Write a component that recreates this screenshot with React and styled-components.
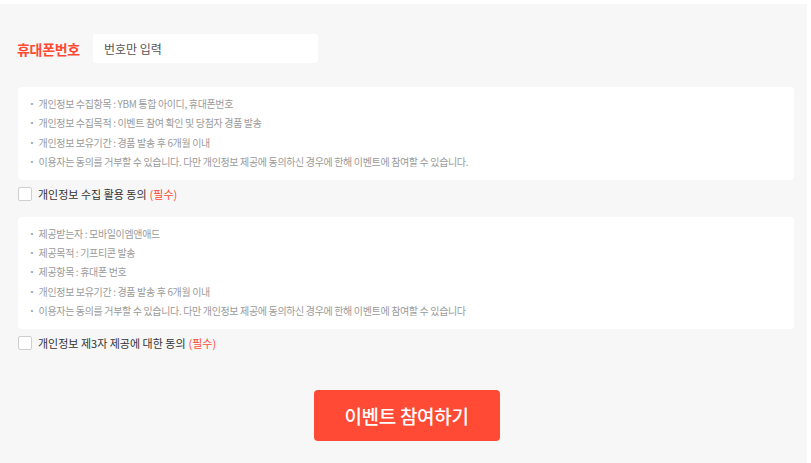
import React, { useState } from "react";
import styled, { createGlobalStyle } from "styled-components";

const GlobalStyle = createGlobalStyle`
  html, body {
    margin: 0;
    padding: 0;
    background: #ffffff;
  }
  body {
    font-family: "Noto Sans CJK KR", "Noto Sans", sans-serif;
  }
`;

const Page = styled.div`
  margin-top: 4px;
  width: 807px;
  height: 459px;
  background-color: #f7f7f7;
  box-sizing: border-box;
  padding: 30px 13px 0 18px;
  display: flex;
  flex-direction: column;
`;

const PhoneRow = styled.div`
  display: flex;
  align-items: center;
  height: 29px;
`;

const PhoneLabel = styled.label`
  width: 76px;
  margin-left: -1px;
  color: #ff4a33;
  font-size: 14px;
  font-weight: 700;
  letter-spacing: -0.3px;
`;

const PhoneInput = styled.input`
  width: 225px;
  height: 29px;
  box-sizing: border-box;
  border: none;
  border-radius: 3px;
  background: #ffffff;
  padding: 0 11px;
  font-family: inherit;
  font-size: 12px;
  color: #333;
  outline: none;

  &::placeholder {
    color: #555;
  }
`;

const TermsBox = styled.ul`
  list-style: none;
  margin: ${(p) => p.$top}px 0 0;
  padding: 7px 11px 8px;
  background: #ffffff;
  border-radius: 4px;
  display: flex;
  flex-direction: column;
`;

const TermItem = styled.li`
  font-size: 10px;
  line-height: 19.4px;
  color: #9a9a9a;
  letter-spacing: -0.35px;

  &::before {
    content: "·";
    margin-right: 4px;
    font-weight: 700;
  }
`;

const AgreeRow = styled.label`
  display: flex;
  align-items: center;
  margin-top: 7px;
  gap: 6px;
  font-size: 11px;
  color: #333;
  cursor: pointer;
  height: 14px;
`;

const Box = styled.span`
  width: 14px;
  height: 14px;
  box-sizing: border-box;
  border: 1px solid #cfcfcf;
  border-radius: 2px;
  background: ${(p) => (p.$checked ? "#ff4b35" : "#ffffff")};
  border-color: ${(p) => (p.$checked ? "#ff4b35" : "#cfcfcf")};
  display: inline-flex;
  align-items: center;
  justify-content: center;
`;

const Required = styled.span`
  color: #ff4b35;
  margin-left: 3px;
`;

const Footer = styled.div`
  display: flex;
  justify-content: center;
  margin-top: 40px;
  padding-left: 1px;
`;

const SubmitButton = styled.button`
  width: 186px;
  height: 51px;
  border: none;
  border-radius: 4px;
  background: #ff4b35;
  color: #ffffff;
  font-family: inherit;
  font-size: 19px;
  font-weight: 500;
  letter-spacing: -0.3px;
  cursor: pointer;
`;

const collectTerms = [
  "개인정보 수집항목 : YBM 통합 아이디, 휴대폰번호",
  "개인정보 수집목적 : 이벤트 참여 확인 및 당첨자 경품 발송",
  "개인정보 보유기간 : 경품 발송 후 6개월 이내",
  "이용자는 동의를 거부할 수 있습니다. 다만 개인정보 제공에 동의하신 경우에 한해 이벤트에 참여할 수 있습니다.",
];

const shareTerms = [
  "제공받는자 : 모바일이엠앤애드",
  "제공목적 : 기프티콘 발송",
  "제공항목 : 휴대폰 번호",
  "개인정보 보유기간 : 경품 발송 후 6개월 이내",
  "이용자는 동의를 거부할 수 있습니다. 다만 개인정보 제공에 동의하신 경우에 한해 이벤트에 참여할 수 있습니다",
];

const Agree = ({ label, checked, onToggle }) => (
  <AgreeRow onClick={onToggle}>
    <Box $checked={checked}>
      {checked && (
        <svg width="10" height="10" viewBox="0 0 10 10">
          <path d="M2 5.2l2 2 4-4.4" stroke="#fff" strokeWidth="1.6" fill="none" />
        </svg>
      )}
    </Box>
    <span>
      {label}
      <Required>(필수)</Required>
    </span>
  </AgreeRow>
);

const App = () => {
  const [phone, setPhone] = useState("");
  const [agreeCollect, setAgreeCollect] = useState(false);
  const [agreeShare, setAgreeShare] = useState(false);

  return (
    <>
      <GlobalStyle />
      <Page>
        <PhoneRow>
          <PhoneLabel>휴대폰번호</PhoneLabel>
          <PhoneInput
            placeholder="번호만 입력"
            value={phone}
            onChange={(e) => setPhone(e.target.value)}
          />
        </PhoneRow>

        <TermsBox $top={24}>
          {collectTerms.map((t) => (
            <TermItem key={t}>{t}</TermItem>
          ))}
        </TermsBox>
        <Agree
          label="개인정보 수집 활용 동의"
          checked={agreeCollect}
          onToggle={() => setAgreeCollect(!agreeCollect)}
        />

        <TermsBox $top={16}>
          {shareTerms.map((t) => (
            <TermItem key={t}>{t}</TermItem>
          ))}
        </TermsBox>
        <Agree
          label="개인정보 제3자 제공에 대한 동의"
          checked={agreeShare}
          onToggle={() => setAgreeShare(!agreeShare)}
        />

        <Footer>
          <SubmitButton>이벤트 참여하기</SubmitButton>
        </Footer>
      </Page>
    </>
  );
};

export default App;
